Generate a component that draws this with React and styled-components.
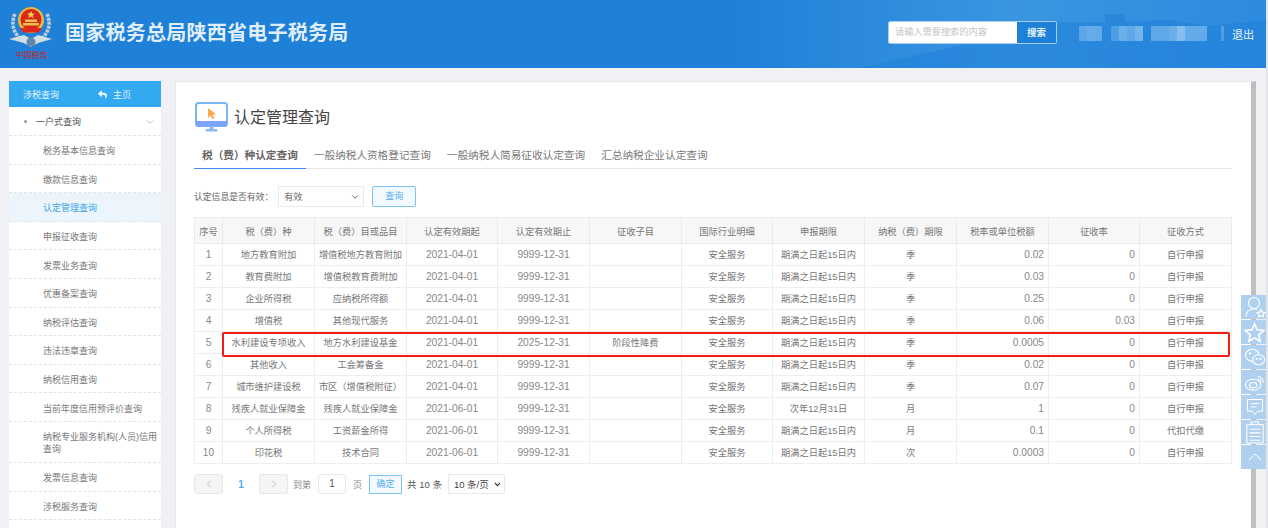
import React from "react";
import styled, { createGlobalStyle } from "styled-components";
import { ChevronDown, ChevronLeft, ChevronRight, ChevronUp } from "lucide-react";
import { FaReply } from "react-icons/fa";

const GlobalStyle = createGlobalStyle`
  html, body {
    margin: 0;
    padding: 0;
    height: 528px;
    overflow: hidden;
    background: #eff1f4;
    font-family: "Liberation Sans", "Noto Sans CJK SC", sans-serif;
    color: #666;
  }
  * { box-sizing: border-box; }
`;

const Page = styled.div`
  position: relative;
  width: 1268px;
  height: 528px;
  overflow: hidden;
  border-right: 2px solid #e3e4ea;
`;

const Header = styled.header`
  position: relative;
  height: 68px;
  width: 1268px;
  display: flex;
  align-items: center;
  overflow: hidden;
  background: linear-gradient(90deg, #1f80d8 0%, #1f80d8 58%, #3a96e2 80%, #2c8be0 100%);
`;

const Wall = styled.svg`
  position: absolute;
  right: 0;
  top: 0;
`;

const LogoBox = styled.div`
  width: 65px;
  flex: none;
  padding: 5px 0 0 9px;
  height: 68px;
`;

const SiteTitle = styled.h1`
  position: relative;
  margin: 0 0 5px;
  flex: 1;
  font-size: 20px;
  font-weight: 700;
  letter-spacing: 0.25px;
  color: #dfeefa;
`;

const SearchBox = styled.div`
  position: relative;
  display: flex;
  width: 169px;
  height: 23px;
  margin: 0 22px 3px 0;
  border: 1px solid #a6cff2;
  border-radius: 2px;
  overflow: hidden;
`;

const SearchInput = styled.div`
  flex: 1;
  background: #fff;
  color: #c4c4c4;
  font-size: 9.2px;
  line-height: 21px;
  padding-left: 6px;
`;

const SearchButton = styled.div`
  width: 39px;
  background: #1f80d8;
  color: #e6f2fc;
  font-size: 9.5px;
  font-weight: 700;
  line-height: 21px;
  text-align: center;
`;

const BlurredName = styled.div`
  position: relative;
  display: flex;
  width: 148px;
  height: 15px;
  margin: 0 5px 2px 0;
`;

const BlurBlock = styled.span`
  height: 15px;
  background: ${(p) => p.$color};
  width: ${(p) => p.$w}px;
`;

const Logout = styled.div`
  position: relative;
  width: 36px;
  font-size: 11px;
  color: #e6f2fc;
`;

const Body = styled.div`
  display: flex;
  align-items: flex-start;
  padding: 13px 0 0 9px;
  gap: 14px;
`;

const Sidebar = styled.aside`
  width: 152px;
  height: 460px;
  flex: none;
  background: #fff;
  border-radius: 2px 2px 0 0;
`;

const SideHead = styled.div`
  height: 26px;
  background: #33a9f2;
  display: flex;
  align-items: center;
  color: #e6f5fe;
  font-size: 9px;
  padding-left: 14px;
`;

const HomeLink = styled.span`
  display: flex;
  align-items: center;
  gap: 6px;
  margin-left: 39px;
`;

const SideGroup = styled.div`
  height: 29px;
  display: flex;
  align-items: center;
  font-size: 9px;
  color: #555;
  padding: 1px 5px 0 15px;
  border-bottom: 1px dashed #e4e4e4;
`;

const Dot = styled.i`
  width: 3px;
  height: 3px;
  border-radius: 50%;
  background: #999;
  margin-right: 9px;
`;

const SideItem = styled.div`
  min-height: ${(p) => (p.$tall ? 41 : 28.6)}px;
  display: flex;
  align-items: center;
  padding: 3px 0 0 34px;
  font-size: 9px;
  line-height: 12px;
  color: ${(p) => (p.$active ? "#3ba4ec" : "#777")};
  background: ${(p) => (p.$active ? "#ecf5fc" : "#fff")};
  border-bottom: 1px dashed #e4e4e4;
`;

const Main = styled.main`
  width: 1081px;
  height: 460px;
  flex: none;
  background: #fff;
  border: 1px solid #e6e8eb;
  border-right: 5px solid #bfbfbf;
  border-radius: 2px 0 0 0;
  padding: 20px 19px 0 18px;
`;

const TitleRow = styled.div`
  display: flex;
  align-items: center;
  gap: 6px;
  height: 31px;
  margin-left: 1px;
`;

const PageTitle = styled.h2`
  margin: 0 0 3px;
  font-size: 16px;
  font-weight: 400;
  color: #444;
`;

const Tabs = styled.div`
  display: flex;
  margin-top: 8px;
  height: 28px;
  border-bottom: 1px solid #e8e8e8;
`;

const Tab = styled.div`
  height: 28px;
  padding: 0 8px;
  font-size: 10.65px;
  line-height: 29px;
  color: ${(p) => (p.$active ? "#666" : "#777")};
  font-weight: ${(p) => (p.$active ? 700 : 400)};
  border-bottom: ${(p) => (p.$active ? "1px solid #3d8df0" : "none")};
`;

const FilterRow = styled.div`
  display: flex;
  align-items: center;
  margin-top: 17px;
  height: 21px;
  font-size: 8.8px;
  color: #666;
`;

const SelectBox = styled.div`
  width: 86px;
  height: 21px;
  margin-left: 5px;
  padding: 0 3px 0 5px;
  display: flex;
  align-items: center;
  justify-content: space-between;
  border: 1px solid #ebebeb;
  font-size: 9px;
  color: #666;
`;

const QueryButton = styled.div`
  width: 44px;
  height: 21px;
  margin-left: 8px;
  border: 1px solid #7cc2f4;
  border-radius: 2px;
  background: #f3faff;
  color: #51aef0;
  font-size: 9px;
  line-height: 19px;
  text-align: center;
`;

const TableWrap = styled.div`
  position: relative;
  margin-top: 10px;
`;

const Table = styled.table`
  width: 1037px;
  border-collapse: collapse;
  table-layout: fixed;
  font-size: 9.25px;
`;

const Th = styled.th`
  height: 26px;
  padding: 0;
  font-weight: 400;
  color: #777;
  background: #f7f7f7;
  border: 1px solid #eaeaea;
`;

const Td = styled.td`
  height: 22px;
  padding: 0 ${(p) => (p.$right ? "4px" : "0")} ${(p) => (p.$num ? "0" : "2px")} 0;
  color: ${(p) => (p.$num ? "#888" : "#777")};
  text-align: ${(p) => (p.$right ? "right" : "center")};
  font-size: ${(p) => (p.$num ? "10.2px" : "9.25px")};
  white-space: nowrap;
  overflow: hidden;
  border: 1px solid #eeeeee;
`;

const Highlight = styled.div`
  position: absolute;
  left: 28px;
  right: 2px;
  top: 115px;
  height: 25px;
  border: 2px solid #f01c14;
  border-radius: 2px;
  pointer-events: none;
`;

const Pager = styled.div`
  display: flex;
  align-items: center;
  margin-top: 10px;
  height: 20px;
  font-size: 9px;
  color: #888;
`;

const PageArrow = styled.div`
  width: 29px;
  height: 20px;
  display: flex;
  align-items: center;
  justify-content: center;
  background: #f5f5f5;
  border: 1px solid #e8e8e8;
  border-radius: 2px;
  color: #999;
`;

const PageCurrent = styled.span`
  width: 36px;
  text-align: center;
  color: #51aef0;
  font-size: 10px;
  font-weight: 700;
`;

const GoLabel = styled.span`
  margin-left: 5px;
`;

const PageInput = styled.div`
  width: 28px;
  height: 20px;
  margin: 0 7px;
  border: 1px solid #e8e8e8;
  border-radius: 2px;
  color: #555;
  font-size: 10px;
  line-height: 18px;
  text-align: center;
`;

const ConfirmButton = styled.div`
  width: 33px;
  height: 19px;
  margin-left: 7px;
  border: 1px solid #7cc2f4;
  background: #f3faff;
  color: #51aef0;
  line-height: 17px;
  text-align: center;
`;

const Total = styled.span`
  margin: 0 6px 0 5px;
  color: #555;
  font-size: 9.5px;
`;

const SizeSelect = styled.div`
  width: 57px;
  height: 20px;
  padding: 0 2px 0 5px;
  display: flex;
  align-items: center;
  justify-content: space-between;
  border: 1px solid #e8e8e8;
  border-radius: 2px;
  color: #444;
  font-size: 9.5px;
`;

const FloatBar = styled.div`
  position: absolute;
  right: -2px;
  top: 295px;
  width: 27px;
  display: flex;
  flex-direction: column;
  gap: 1px;
`;

const FloatButton = styled.div`
  height: 24px;
  background: #afd0ef;
  display: flex;
  align-items: center;
  justify-content: center;
`;

const columns = [
  ["序号", 28], ["税（费）种", 92], ["税（费）目或品目", 92], ["认定有效期起", 91], ["认定有效期止", 92],
  ["征收子目", 92], ["国际行业明细", 91], ["申报期限", 92], ["纳税（费）期限", 92], ["税率或单位税额", 92],
  ["征收率", 91], ["征收方式", 92],
];

const rows = [
  ["1", "地方教育附加", "增值税地方教育附加", "2021-04-01", "9999-12-31", "", "期满之日起15日内", "季", "0.02", "0", "自行申报"],
  ["2", "教育费附加", "增值税教育费附加", "2021-04-01", "9999-12-31", "", "期满之日起15日内", "季", "0.03", "0", "自行申报"],
  ["3", "企业所得税", "应纳税所得额", "2021-04-01", "9999-12-31", "", "期满之日起15日内", "季", "0.25", "0", "自行申报"],
  ["4", "增值税", "其他现代服务", "2021-04-01", "9999-12-31", "", "期满之日起15日内", "季", "0.06", "0.03", "自行申报"],
  ["5", "水利建设专项收入", "地方水利建设基金", "2021-04-01", "2025-12-31", "阶段性降费", "期满之日起15日内", "季", "0.0005", "0", "自行申报"],
  ["6", "其他收入", "工会筹备金", "2021-04-01", "9999-12-31", "", "期满之日起15日内", "季", "0.02", "0", "自行申报"],
  ["7", "城市维护建设税", "市区（增值税附征）", "2021-04-01", "9999-12-31", "", "期满之日起15日内", "季", "0.07", "0", "自行申报"],
  ["8", "残疾人就业保障金", "残疾人就业保障金", "2021-06-01", "9999-12-31", "", "次年12月31日", "月", "1", "0", "自行申报"],
  ["9", "个人所得税", "工资薪金所得", "2021-06-01", "9999-12-31", "", "期满之日起15日内", "月", "0.1", "0", "代扣代缴"],
  ["10", "印花税", "技术合同", "2021-06-01", "9999-12-31", "", "期满之日起15日内", "次", "0.0003", "0", "自行申报"],
];

const menu = [
  "税务基本信息查询", "缴款信息查询", "认定管理查询", "申报征收查询", "发票业务查询", "优惠备案查询",
  "纳税评估查询", "违法违章查询", "纳税信用查询", "当前年度信用预评价查询",
  "纳税专业服务机构(人员)信用查询", "发票信息查询", "涉税服务查询",
];

const Emblem = () => (
  <svg width="46" height="58" viewBox="0 0 46 58">
    <path d="M6 9 C1 20 5 31 17 37 M38 9 C43 20 39 31 27 37" fill="none" stroke="#c3cfd8" strokeWidth="3.500" strokeDasharray="3 1" />
    <path d="M0 34 L15 30 L22 34 L29 30 L43 34 L29 38 L22 42 L15 38 Z" fill="#d3dce3" />
    <circle cx="22" cy="37" r="4.500" fill="#5f87aa" />
    <circle cx="22" cy="15" r="13" fill="#e8b93a" />
    <circle cx="22" cy="14.500" r="10.500" fill="#d8261c" />
    <path d="M22 6l1.200 2.600h2.800l-2.200 1.800.9 2.800-2.700-1.600-2.700 1.600.9-2.800-2.200-1.800h2.800z" fill="#f4d24a" />
    <path d="M14 18h16v2.500H14zM16 14.500h12V17H16z" fill="#eec24a" />
    <path d="M11 23h22l-3 4.500H14z" fill="#e0281c" />
    <text x="22.500" y="53" textAnchor="middle" fontSize="8" fill="#c8201c" fontFamily="Noto Sans CJK SC">中国税务</text>
  </svg>
);

const MonitorIcon = () => (
  <svg width="33" height="31" viewBox="0 0 33 31">
    <rect x="1" y="1" width="31" height="23" rx="2.500" fill="#fff" stroke="#7db4f5" strokeWidth="2" />
    <path d="M1 19h31v3a2.500 2.500 0 0 1-2.500 2.500h-27A2.500 2.500 0 0 1 1 22z" fill="#7aa4f7" />
    <rect x="14.500" y="24" width="4" height="4" fill="#8db8f5" />
    <rect x="10.500" y="27" width="12" height="2.500" rx="1" fill="#8db8f5" />
    <path d="M13 6l0 10 2.500-2.200 2 3.400 2-1.100-2-3.200 3.300-.7z" fill="#f9a94a" />
  </svg>
);

const icon = { fill: "none", stroke: "#fff", strokeWidth: 1.2 };

const floatIcons = [
  <svg width="24" height="24" viewBox="0 0 24 24" {...icon}><circle cx="11" cy="8" r="5.500" /><path d="M3 22c0-6 3-8 8-8 1 0 2 .1 3 .5" /><path d="M18 14.500l1.300 2.600 2.700.4-2 1.900.5 2.600-2.500-1.300-2.500 1.300.5-2.600-2-1.900 2.700-.4z" /></svg>,
  <svg width="21" height="21" viewBox="0 0 24 24" {...icon} strokeWidth="1.8"><path d="M12 2l3 7 7.500.7-5.700 5 1.700 7.300-6.500-3.900L5.500 22l1.700-7.300-5.700-5L9 9z" /></svg>,
  <svg width="22" height="20" viewBox="0 0 24 22" {...icon}><ellipse cx="9" cy="9" rx="7.500" ry="6.500" /><ellipse cx="16" cy="14" rx="6.500" ry="5.500" fill="#afd0ef" /><circle cx="14" cy="13" r=".7" fill="#fff" /><circle cx="18" cy="13" r=".7" fill="#fff" /><circle cx="6.500" cy="7" r=".7" fill="#fff" /></svg>,
  <svg width="22" height="20" viewBox="0 0 24 22" {...icon}><ellipse cx="10" cy="14" rx="8.500" ry="6" /><ellipse cx="10" cy="14.500" rx="4" ry="3" /><path d="M15 5a6 6 0 0 1 6 7M15 8a3 3 0 0 1 3 4" /></svg>,
  <svg width="20" height="20" viewBox="0 0 24 24" {...icon}><path d="M3 3h18v14h-6l-3 4-3-4H3z" /><path d="M7 8h10M7 12h7" /></svg>,
  <svg width="20" height="24" viewBox="0 0 22 26" {...icon}><rect x="2" y="5" width="18" height="20" /><path d="M7 5V2h8v3M5 10h12M5 14h12M5 18h12M5 22h12" /></svg>,
  <ChevronUp size={24} color="#fff" strokeWidth={1} />,
];

// the masked taxpayer name next to the logout link
const blurBlocks = [
  [8, "#5ba6e8"], [8, "#68ade9"], [7, "#63aae8"], [9, "transparent"], [8, "#4f9ee5"], [8, "#6cb0ea"], [8, "#5ea8e8"],
  [8, "#74b4ec"], [8, "transparent"], [18, "#5ea8e8"], [8, "#6aaeea"], [8, "#86bfee"], [14, "#63abe9"], [8, "#62aae9"],
  [14, "transparent"], [3, "#4f9ee5"],
];

const App = () => (
  <Page>
    <GlobalStyle />
    <Header>
      <Wall width="500" height="68" viewBox="0 0 500 68">
        <path d="M90 68 C150 55 220 40 280 22 L337 22 V14 H357 V22 L400 20 L440 26 L500 20 V68 Z" fill="#1f80d8" opacity=".55" />
      </Wall>
      <LogoBox>
        <Emblem />
      </LogoBox>
      <SiteTitle>国家税务总局陕西省电子税务局</SiteTitle>
      <SearchBox>
        <SearchInput>请输入需要搜索的内容</SearchInput>
        <SearchButton>搜索</SearchButton>
      </SearchBox>
      <BlurredName>
        {blurBlocks.map(([w, c], i) => (
          <BlurBlock key={i} $w={w} $color={c} />
        ))}
      </BlurredName>
      <Logout>退出</Logout>
    </Header>
    <Body>
      <Sidebar>
        <SideHead>
          涉税查询
          <HomeLink>
            <FaReply size={9} />
            主页
          </HomeLink>
        </SideHead>
        <SideGroup>
          <Dot />
          一户式查询
          <ChevronDown size={12} color="#888" strokeWidth={1} style={{ marginLeft: "auto" }} />
        </SideGroup>
        {menu.map((m, i) => (
          <SideItem key={m} $active={i === 2} $tall={i === 10}>
            {m}
          </SideItem>
        ))}
      </Sidebar>
      <Main>
        <TitleRow>
          <MonitorIcon />
          <PageTitle>认定管理查询</PageTitle>
        </TitleRow>
        <Tabs>
          <Tab $active>税（费）种认定查询</Tab>
          <Tab>一般纳税人资格登记查询</Tab>
          <Tab>一般纳税人简易征收认定查询</Tab>
          <Tab>汇总纳税企业认定查询</Tab>
        </Tabs>
        <FilterRow>
          认定信息是否有效：
          <SelectBox>
            有效
            <ChevronDown size={10} color="#444" strokeWidth={2} />
          </SelectBox>
          <QueryButton>查询</QueryButton>
        </FilterRow>
        <TableWrap>
          <Table>
            <colgroup>
              {columns.map(([name, w]) => (
                <col key={name} style={{ width: w }} />
              ))}
            </colgroup>
            <thead>
              <tr>
                {columns.map(([name]) => (
                  <Th key={name}>{name}</Th>
                ))}
              </tr>
            </thead>
            <tbody>
              {rows.map((r) => (
                <tr key={r[0]}>
                  <Td $num>{r[0]}</Td>
                  <Td>{r[1]}</Td>
                  <Td>{r[2]}</Td>
                  <Td $num>{r[3]}</Td>
                  <Td $num>{r[4]}</Td>
                  <Td>{r[5]}</Td>
                  <Td>安全服务</Td>
                  <Td>{r[6]}</Td>
                  <Td>{r[7]}</Td>
                  <Td $num $right>{r[8]}</Td>
                  <Td $num $right>{r[9]}</Td>
                  <Td>{r[10]}</Td>
                </tr>
              ))}
            </tbody>
          </Table>
          <Highlight />
        </TableWrap>
        <Pager>
          <PageArrow>
            <ChevronLeft size={12} strokeWidth={1.2} />
          </PageArrow>
          <PageCurrent>1</PageCurrent>
          <PageArrow>
            <ChevronRight size={12} strokeWidth={1.2} />
          </PageArrow>
          <GoLabel>到第</GoLabel>
          <PageInput>1</PageInput>
          页
          <ConfirmButton>确定</ConfirmButton>
          <Total>共 10 条</Total>
          <SizeSelect>
            10 条/页
            <ChevronDown size={9} color="#222" strokeWidth={3} />
          </SizeSelect>
        </Pager>
      </Main>
    </Body>
    <FloatBar>
      {floatIcons.map((ic, i) => (
        <FloatButton key={i}>{ic}</FloatButton>
      ))}
    </FloatBar>
  </Page>
);

export default App;
